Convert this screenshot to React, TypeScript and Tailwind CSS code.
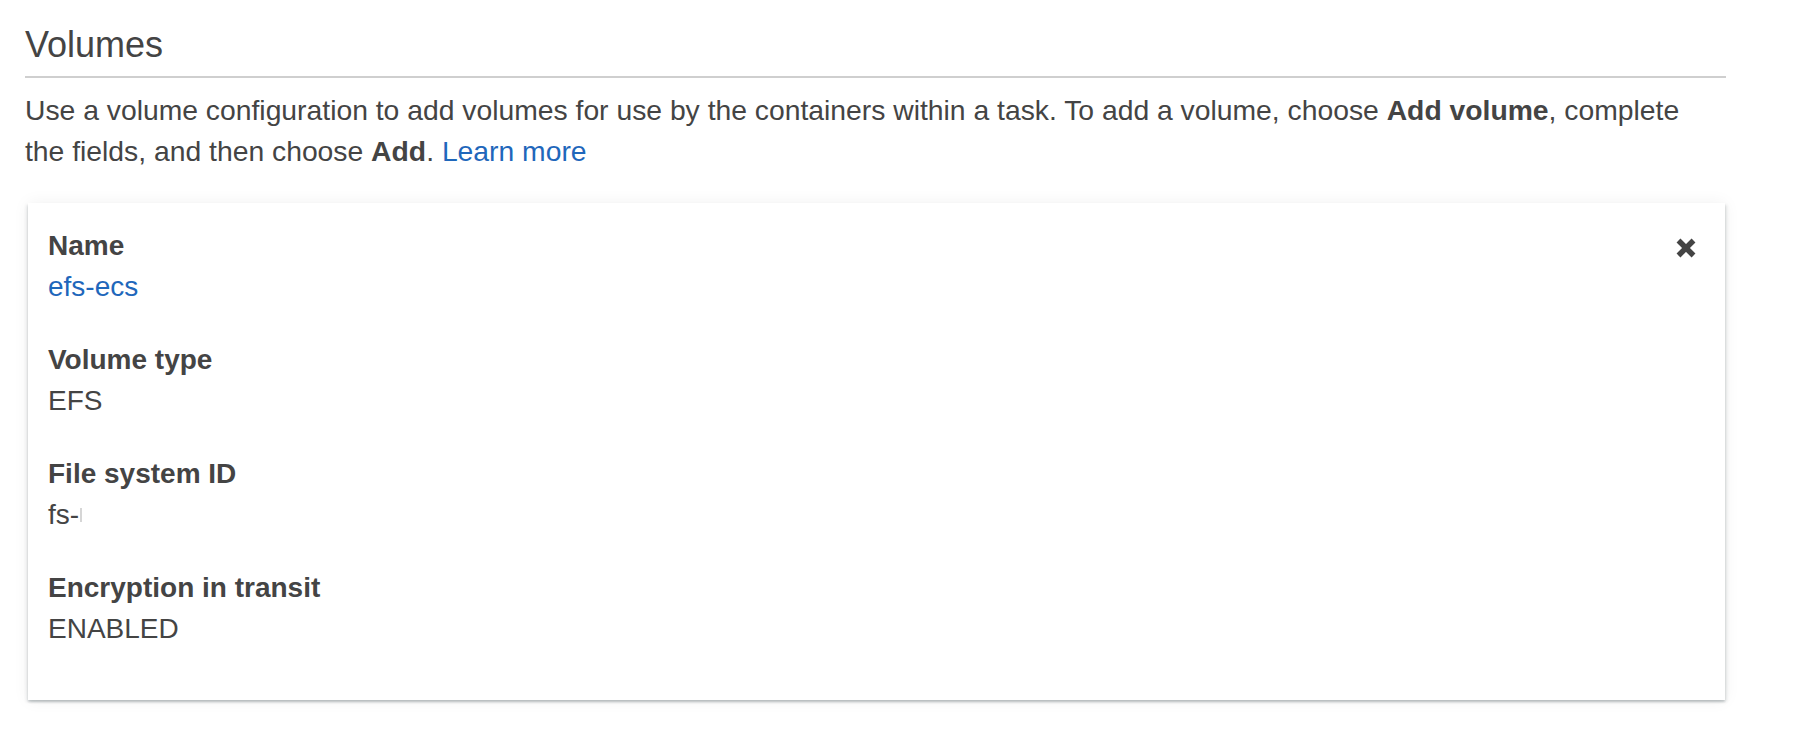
import { Fragment } from "react";

const fields = [
  { label: "Name", value: "efs-ecs", link: true },
  { label: "Volume type", value: "EFS" },
  { label: "File system ID", value: "fs-" },
  { label: "Encryption in transit", value: "ENABLED" },
];

function CloseIcon() {
  return (
    <svg width="22" height="20" viewBox="0 0 22 20" className="block">
      <path d="M3.5 2.5 L18.5 17.5 M18.5 2.5 L3.5 17.5" stroke="#444" strokeWidth="5.5" strokeLinecap="butt" />
    </svg>
  );
}

export default function App() {
  return (
    <div className="h-[731px] w-full bg-white font-['Liberation_Sans',Arial,sans-serif] text-[#444]">
      <div className="w-[1726px] pl-[25px] pt-[24px]">
        <h2 className="border-b-2 border-[#cfcfcf] pb-[10px] text-[36px] font-normal leading-[42px]">Volumes</h2>

        <p className="mt-[12px] text-[28.3px] leading-[41px]">
          Use a volume configuration to add volumes for use by the containers within a task. To add a volume, choose{" "}
          <b className="font-bold">Add volume</b>, complete
          <br />
          the fields, and then choose <b className="font-bold">Add</b>.{" "}
          <a className="text-[#1f67bb]">Learn more</a>
        </p>
      </div>

      <div className="ml-[28px] mt-[31px] flex w-[1697px] bg-white pb-[51px] pl-[20px] pr-[20px] pt-[22px] shadow-[0_2px_2px_rgba(0,28,36,0.14),2px_2px_3px_rgba(0,28,36,0.09),-2px_2px_3px_rgba(0,28,36,0.07),0_0_16px_rgba(0,0,0,0.06)]">
        <div className="flex flex-1 flex-col gap-[32px]">
          {fields.map((f) => (
            <Fragment key={f.label}>
              <div className="text-[28px] leading-[41px]">
                <div className="font-bold">{f.label}</div>
                {f.link ? (
                  <a className="text-[#1f67bb]">{f.value}</a>
                ) : (
                  <div className="flex items-center">
                    {f.value}
                    {f.value === "fs-" && <span className="ml-[1px] h-[14px] w-[2px] bg-[#d6d6d6]" />}
                  </div>
                )}
              </div>
            </Fragment>
          ))}
        </div>
        <button className="mr-[8px] mt-[13px] self-start">
          <CloseIcon />
        </button>
      </div>
    </div>
  );
}
